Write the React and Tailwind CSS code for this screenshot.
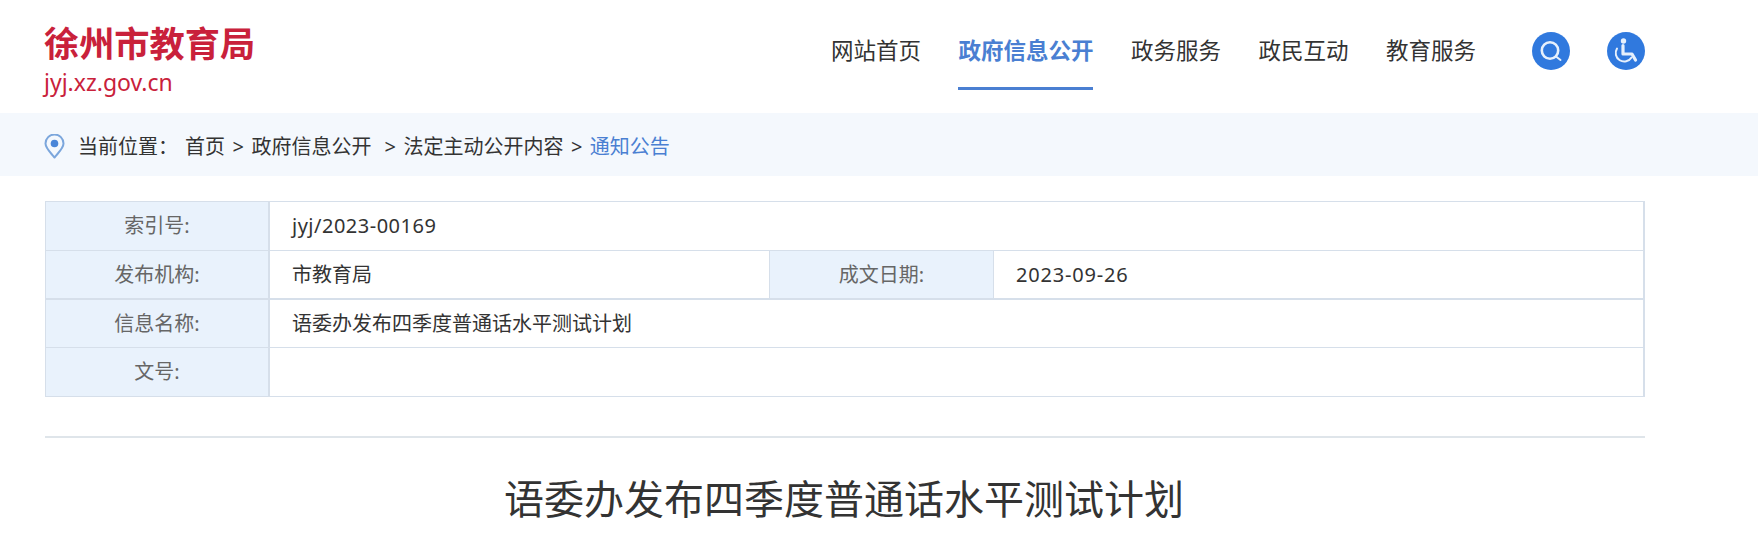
const NAV = ['网站首页', '政府信息公开', '政务服务', '政民互动', '教育服务']

function SearchIcon() {
  return (
    <span className="flex h-[38px] w-[38px] rounded-full bg-[#3079de]">
      <svg width="38" height="38" viewBox="0 0 38 38" fill="none" stroke="#e6f0fc" strokeWidth="2.600">
        <circle cx="18" cy="18.500" r="8.200" />
        <path d="M24 24.500l4.500 3.500" strokeLinecap="round" strokeWidth="2" />
      </svg>
    </span>
  )
}

function WheelchairIcon() {
  return (
    <span className="flex h-[38px] w-[38px] rounded-full bg-[#3079de]">
      <svg width="38" height="38" viewBox="0 0 38 38" fill="none" stroke="#e6f0fc">
        <circle cx="16.500" cy="9" r="2.700" fill="#e6f0fc" stroke="none" />
        <path d="M16 13.500v8.500h9l3.500 6" strokeWidth="3.200" strokeLinejoin="round" strokeLinecap="round" />
        <path d="M10 16.500a8.200 8.200 0 1 0 14.500 9" strokeWidth="2" strokeLinecap="round" />
      </svg>
    </span>
  )
}

function PinIcon() {
  return (
    <svg width="21" height="25" viewBox="0 0 21 25" fill="none">
      <path d="M10.500 23.500C6 18 1.500 14 1.500 9.500a9 9 0 0 1 18 0c0 4.500-4.500 8.500-9 14z" stroke="#7ba6dc" strokeWidth="2" strokeLinejoin="round" />
      <circle cx="10.500" cy="9.500" r="3.800" fill="#4a86d8" />
    </svg>
  )
}

function Label({ children, className = '' }) {
  return (
    <div className={`flex items-center justify-center bg-[#e9f2fc] text-[20px] text-[#666666] ${className}`}>
      {children}
    </div>
  )
}

function Value({ children, className = '' }) {
  return <div className={`flex items-center pl-[22px] text-[20px] text-[#333333] ${className}`}>{children}</div>
}

export default function App() {
  return (
    <div
      className="h-[540px] overflow-hidden bg-white"
      style={{ fontFamily: '"Noto Sans", "Noto Sans CJK SC", sans-serif' }}
    >
      {/* Header */}
      <header className="flex h-[113px] pl-[44px] pr-[113px]">
        <div className="pt-[20px] text-[#c9213b]">
          <div className="text-[35.200px] font-bold leading-[46px]">徐州市教育局</div>
          <div className="text-[23px] leading-[33px]">jyj.xz.gov.cn</div>
        </div>
        <nav className="ml-auto flex items-start">
          <div className="flex gap-[37.500px]">
            {NAV.map((item, i) => (
              <a
                key={item}
                className={`h-[90px] pt-[31px] text-[22.500px] leading-[40px] ${
                  i === 1
                    ? 'border-b-[3px] border-[#4a7fd2] font-bold text-[#4a7fd2]'
                    : 'text-[#333333]'
                }`}
              >
                {item}
              </a>
            ))}
          </div>
          <div className="ml-[56px] mt-[32px] flex gap-[37px]">
            <SearchIcon />
            <WheelchairIcon />
          </div>
        </nav>
      </header>

      {/* Breadcrumb */}
      <div className="flex h-[63px] items-center bg-[#f4f8fd] pl-[44px] pt-[4px] text-[20px] text-[#333333]">
        <PinIcon />
        <span className="ml-[13px]">当前位置：</span>
        <span className="ml-[7px]">首页</span>
        <span className="mx-[7.500px]">&gt;</span>
        <span>政府信息公开</span>
        <span className="ml-[13px] mr-[7.500px]">&gt;</span>
        <span>法定主动公开内容</span>
        <span className="mx-[7.500px]">&gt;</span>
        <span className="text-[#4a7fd2]">通知公告</span>
      </div>

      {/* Info table */}
      <div className="ml-[45px] mt-[25px] w-[1600px] border-t border-l border-b border-r-2 border-[#d6dfea]">
        <div className="flex h-[49px] border-b border-[#d6dfea]">
          <Label className="w-[224px] border-r-2 border-[#d6dfea]">索引号:</Label>
          <Value className="flex-1 tracking-[0.500px]">jyj/2023-00169</Value>
        </div>
        <div className="flex h-[49px] border-b-2 border-[#d6dfea]">
          <Label className="w-[224px] border-r-2 border-[#d6dfea]">发布机构:</Label>
          <Value className="w-[500px] border-r border-[#d6dfea]">市教育局</Value>
          <Label className="w-[224px] border-r border-[#d6dfea]">成文日期:</Label>
          <Value className="flex-1 tracking-[0.800px]">2023-09-26</Value>
        </div>
        <div className="flex h-[48px] border-b border-[#d6dfea]">
          <Label className="w-[224px] border-r-2 border-[#d6dfea]">信息名称:</Label>
          <Value className="flex-1">语委办发布四季度普通话水平测试计划</Value>
        </div>
        <div className="flex h-[48px]">
          <Label className="w-[224px] border-r-2 border-[#d6dfea]">文号:</Label>
          <Value className="flex-1" />
        </div>
      </div>

      <div className="ml-[45px] mt-[39px] w-[1600px] border-t-2 border-[#dfe5ea]" />

      <h1 className="mt-[26px] w-[1688px] text-center text-[40px] font-normal leading-[70px] text-[#333333]">
        语委办发布四季度普通话水平测试计划
      </h1>
    </div>
  )
}
